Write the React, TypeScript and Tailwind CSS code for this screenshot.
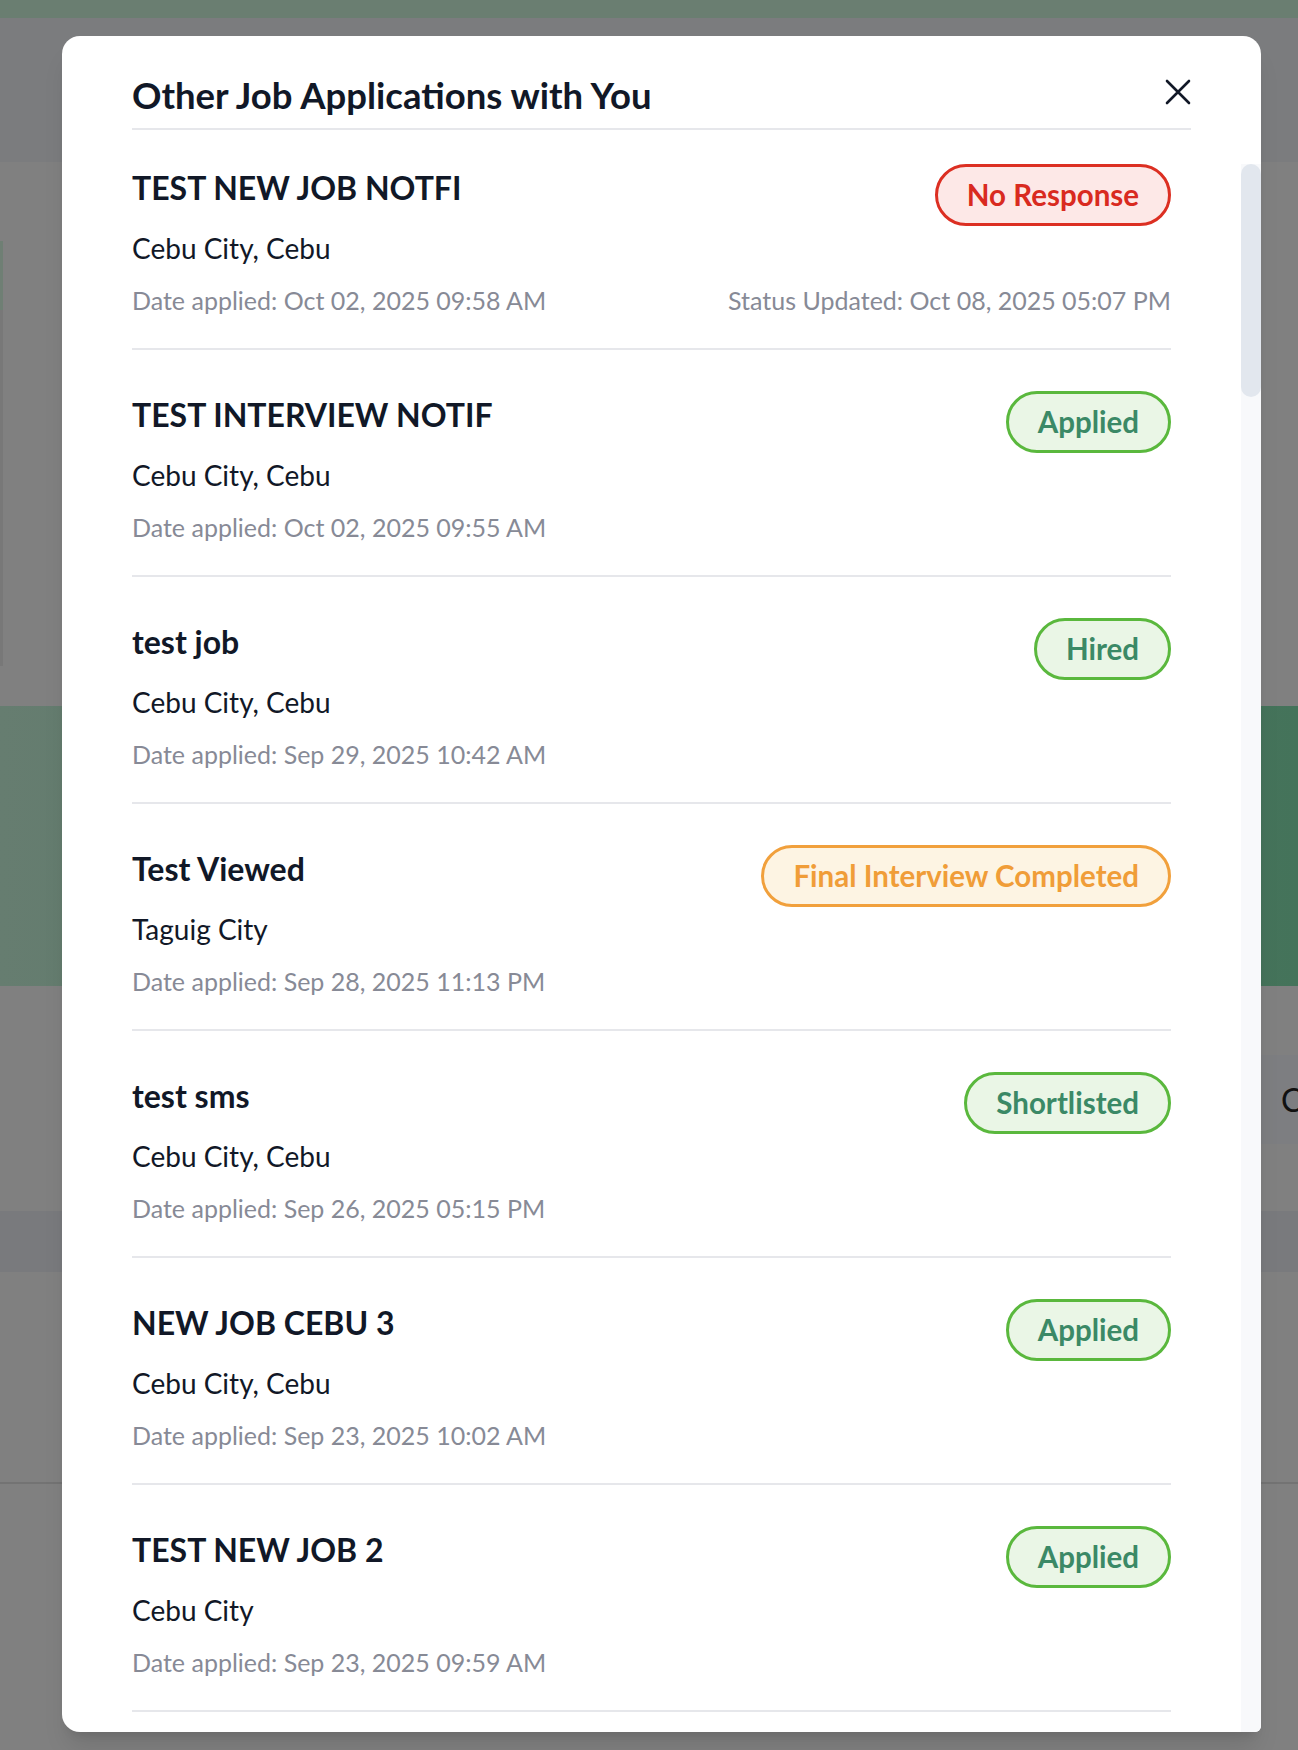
type Status =
  | "No Response"
  | "Applied"
  | "Hired"
  | "Final Interview Completed"
  | "Shortlisted";

interface Application {
  title: string;
  location: string;
  applied: string;
  status: Status;
  updated?: string;
}

const applications: Application[] = [
  {
    title: "TEST NEW JOB NOTFI",
    location: "Cebu City, Cebu",
    applied: "Oct 02, 2025 09:58 AM",
    status: "No Response",
    updated: "Oct 08, 2025 05:07 PM",
  },
  {
    title: "TEST INTERVIEW NOTIF",
    location: "Cebu City, Cebu",
    applied: "Oct 02, 2025 09:55 AM",
    status: "Applied",
  },
  {
    title: "test job",
    location: "Cebu City, Cebu",
    applied: "Sep 29, 2025 10:42 AM",
    status: "Hired",
  },
  {
    title: "Test Viewed",
    location: "Taguig City",
    applied: "Sep 28, 2025 11:13 PM",
    status: "Final Interview Completed",
  },
  {
    title: "test sms",
    location: "Cebu City, Cebu",
    applied: "Sep 26, 2025 05:15 PM",
    status: "Shortlisted",
  },
  {
    title: "NEW JOB CEBU 3",
    location: "Cebu City, Cebu",
    applied: "Sep 23, 2025 10:02 AM",
    status: "Applied",
  },
  {
    title: "TEST NEW JOB 2",
    location: "Cebu City",
    applied: "Sep 23, 2025 09:59 AM",
    status: "Applied",
  },
];

const green = "border-[#5ab83d] bg-[#eaf6e6] text-[#3b8966]";

const statusStyles: Record<Status, string> = {
  "No Response": "border-[#dc2f22] bg-[#fde8e7] text-[#d92a20]",
  Applied: green,
  Hired: green,
  Shortlisted: green,
  "Final Interview Completed": "border-[#f1a03c] bg-[#fdf4e3] text-[#f09d38]",
};

function StatusBadge({ status }: { status: Status }) {
  return (
    <span
      className={`flex h-[62px] items-center rounded-full border-[3px] px-[29px] text-[29.5px] font-bold leading-none whitespace-nowrap ${statusStyles[status]}`}
    >
      {status}
    </span>
  );
}

function ApplicationRow({ app }: { app: Application }) {
  return (
    <div className="flex justify-between border-b-2 border-[#e6e7eb] pt-[41px] pb-[32px] first:pt-0">
      <div className="flex flex-col">
        <h3 className="text-[32px] font-bold leading-[48px] text-[#111827]">
          {app.title}
        </h3>
        <p className="mt-[18px] text-[28px] leading-[36px] text-[#111827]">
          {app.location}
        </p>
        <p className="mt-[18px] text-[25px] leading-[32px] text-[#878a96]">
          Date applied: {app.applied}
        </p>
      </div>
      <div className="flex flex-col items-end justify-between">
        <StatusBadge status={app.status} />
        {app.updated && (
          <p className="text-[25px] leading-[32px] text-[#878a96]">
            Status Updated: {app.updated}
          </p>
        )}
      </div>
    </div>
  );
}

function Backdrop() {
  return (
    <div className="flex h-full flex-col">
      <div className="h-[18px] bg-[#6a7e71]" />
      <div className="h-[144px] bg-[#7b7c7e]" />
      <div className="flex h-[544px] flex-col bg-[#808080] pt-[79px]">
        <div className="h-[425px] w-[3px] bg-[#787878]">
          <div className="h-[69px] bg-[#6f7f74]" />
        </div>
      </div>
      <div className="h-[280px] bg-gradient-to-r from-[#667d70] to-[#44735a]" />
      <div className="h-[69px] bg-[#808080]" />
      <div className="flex h-[89px] justify-end bg-[#808080]">
        <div className="flex w-[60px] items-center bg-[#7d7e81] pl-[43px] text-[32px] leading-none text-[#111]">
          C
        </div>
      </div>
      <div className="h-[67px] bg-[#808080]" />
      <div className="h-[61px] bg-[#797a7d]" />
      <div className="h-[212px] border-b-2 border-[#737373] bg-[#808080]" />
      <div className="flex-1 bg-[#808080]" />
    </div>
  );
}

export default function App() {
  return (
    <div
      className="relative h-[1750px] overflow-hidden bg-[#808080]"
      style={{ fontFamily: "Lato, 'Noto Sans', sans-serif" }}
    >
      <Backdrop />

      <div className="absolute top-[36px] left-[62px] flex h-[1696px] w-[1199px] flex-col overflow-hidden rounded-[18px] rounded-br-[6px] bg-white shadow-xl">
        <div className="px-[70px] pt-[37px]">
          <div className="flex items-center justify-between border-b-2 border-[#e6e7eb] pb-[11px]">
            <h2 className="text-[36.5px] font-bold leading-[44px] text-[#111827]">
              Other Job Applications with You
            </h2>
            <button
              type="button"
              aria-label="Close"
              className="-mt-[6px] text-[#111827]"
            >
              <svg width="26" height="26" viewBox="0 0 26 26" fill="none">
                <path
                  d="M2 2L24 24M24 2L2 24"
                  stroke="currentColor"
                  strokeWidth="2.6"
                  strokeLinecap="round"
                />
              </svg>
            </button>
          </div>
        </div>

        <div className="mt-[34px] flex min-h-0 flex-1">
          <div className="flex-1 overflow-hidden px-[70px]">
            {applications.map((app) => (
              <ApplicationRow key={app.title + app.applied} app={app} />
            ))}
          </div>
          <div className="w-[20px] bg-[#f8f9fb]">
            <div className="h-[233px] rounded-full bg-[#e2e7ee]" />
          </div>
        </div>
      </div>
    </div>
  );
}
